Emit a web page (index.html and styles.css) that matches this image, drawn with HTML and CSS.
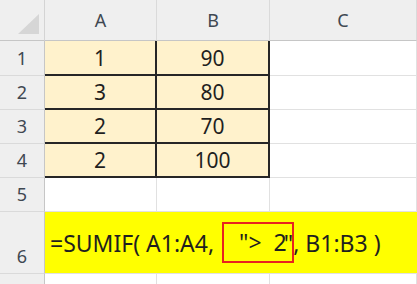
FILE: index.html
```html
<!DOCTYPE html>
<html lang="en">
<head>
  <meta charset="UTF-8">
  <title>SUMIF</title>
  <link rel="stylesheet" href="styles.css">
</head>
<body>
  <div class="sheet">
    <!-- column headers -->
    <div class="corner"><span class="tri"></span></div>
    <div class="col-hd">A</div>
    <div class="col-hd">B</div>
    <div class="col-hd">C</div>

    <div class="row-hd">1</div>
    <div class="val">1</div>
    <div class="val">90</div>
    <div class="cell"></div>

    <div class="row-hd">2</div>
    <div class="val">3</div>
    <div class="val">80</div>
    <div class="cell"></div>

    <div class="row-hd">3</div>
    <div class="val">2</div>
    <div class="val">70</div>
    <div class="cell"></div>

    <div class="row-hd">4</div>
    <div class="val">2</div>
    <div class="val">100</div>
    <div class="cell"></div>

    <div class="row-hd">5</div>
    <div class="cell"></div>
    <div class="cell"></div>
    <div class="cell"></div>

    <div class="row-hd">6</div>
    <div class="formula">=SUMIF( A1:A4, <span class="crit">"&gt;  2</span>", B1:B3 )</div>

    <div class="row-hd"></div>
    <div class="cell"></div>
    <div class="cell"></div>
    <div class="cell"></div>
  </div>
</body>
</html>
```

FILE: styles.css
```css
body {
  margin: 0;
  background: #ffffff;
  overflow: hidden;
  font-family: "Noto Sans", "Open Sans", sans-serif;
}
.sheet {
  display: grid;
  grid-template-columns: 45px 112px 113px 1fr;
  grid-template-rows: 41px 35px 34px 34px 34px 34px 62px 20px;
  width: 417px;
}
.sheet > div {
  box-sizing: border-box;
}
.corner {
  background: #efefef;
  border-right: 1px solid #d4d4d4;
  border-bottom: 1px solid #c6c6c6;
  position: relative;
}
.tri {
  position: absolute;
  right: 5px;
  bottom: 6px;
  width: 0;
  height: 0;
  border-left: 21px solid transparent;
  border-bottom: 20px solid #d6d6d6;
}
.col-hd, .row-hd {
  background: #efefef;
  color: #3f4852;
  font-size: 18px;
  display: flex;
  justify-content: center;
}
.col-hd {
  align-items: center;
  border-right: 1px solid #dadada;
  border-bottom: 1px solid #c6c6c6;
}
.row-hd {
  align-items: flex-end;
  padding-bottom: 5px;
  border-right: 1px solid #c6c6c6;
  border-bottom: 1px solid #dadada;
}
.cell {
  border-right: 1px solid #e1e1e1;
  border-bottom: 1px solid #e1e1e1;
}
.val {
  background: #fff2cc;
  color: #1f1f1f;
  font-size: 21px;
  display: flex;
  align-items: center;
  justify-content: center;
  border-right: 2px solid #262626;
  border-bottom: 2px solid #262626;
}
.formula {
  grid-column: 2 / 5;
  background: #ffff00;
  color: #1f1f1f;
  font-size: 23px;
  display: flex;
  align-items: center;
  padding-left: 5px;
  white-space: pre;
  border-bottom: 1px solid #e1e1e1;
}
/* red frame around the criteria, closing quote overlaps its edge */
.crit {
  display: inline-block;
  box-sizing: border-box;
  height: 41px;
  line-height: 37px;
  margin-left: 2px;
  padding-left: 15px;
  padding-right: 5px;
  margin-right: -10px;
  border: 2px solid #e8231f;
}
```
